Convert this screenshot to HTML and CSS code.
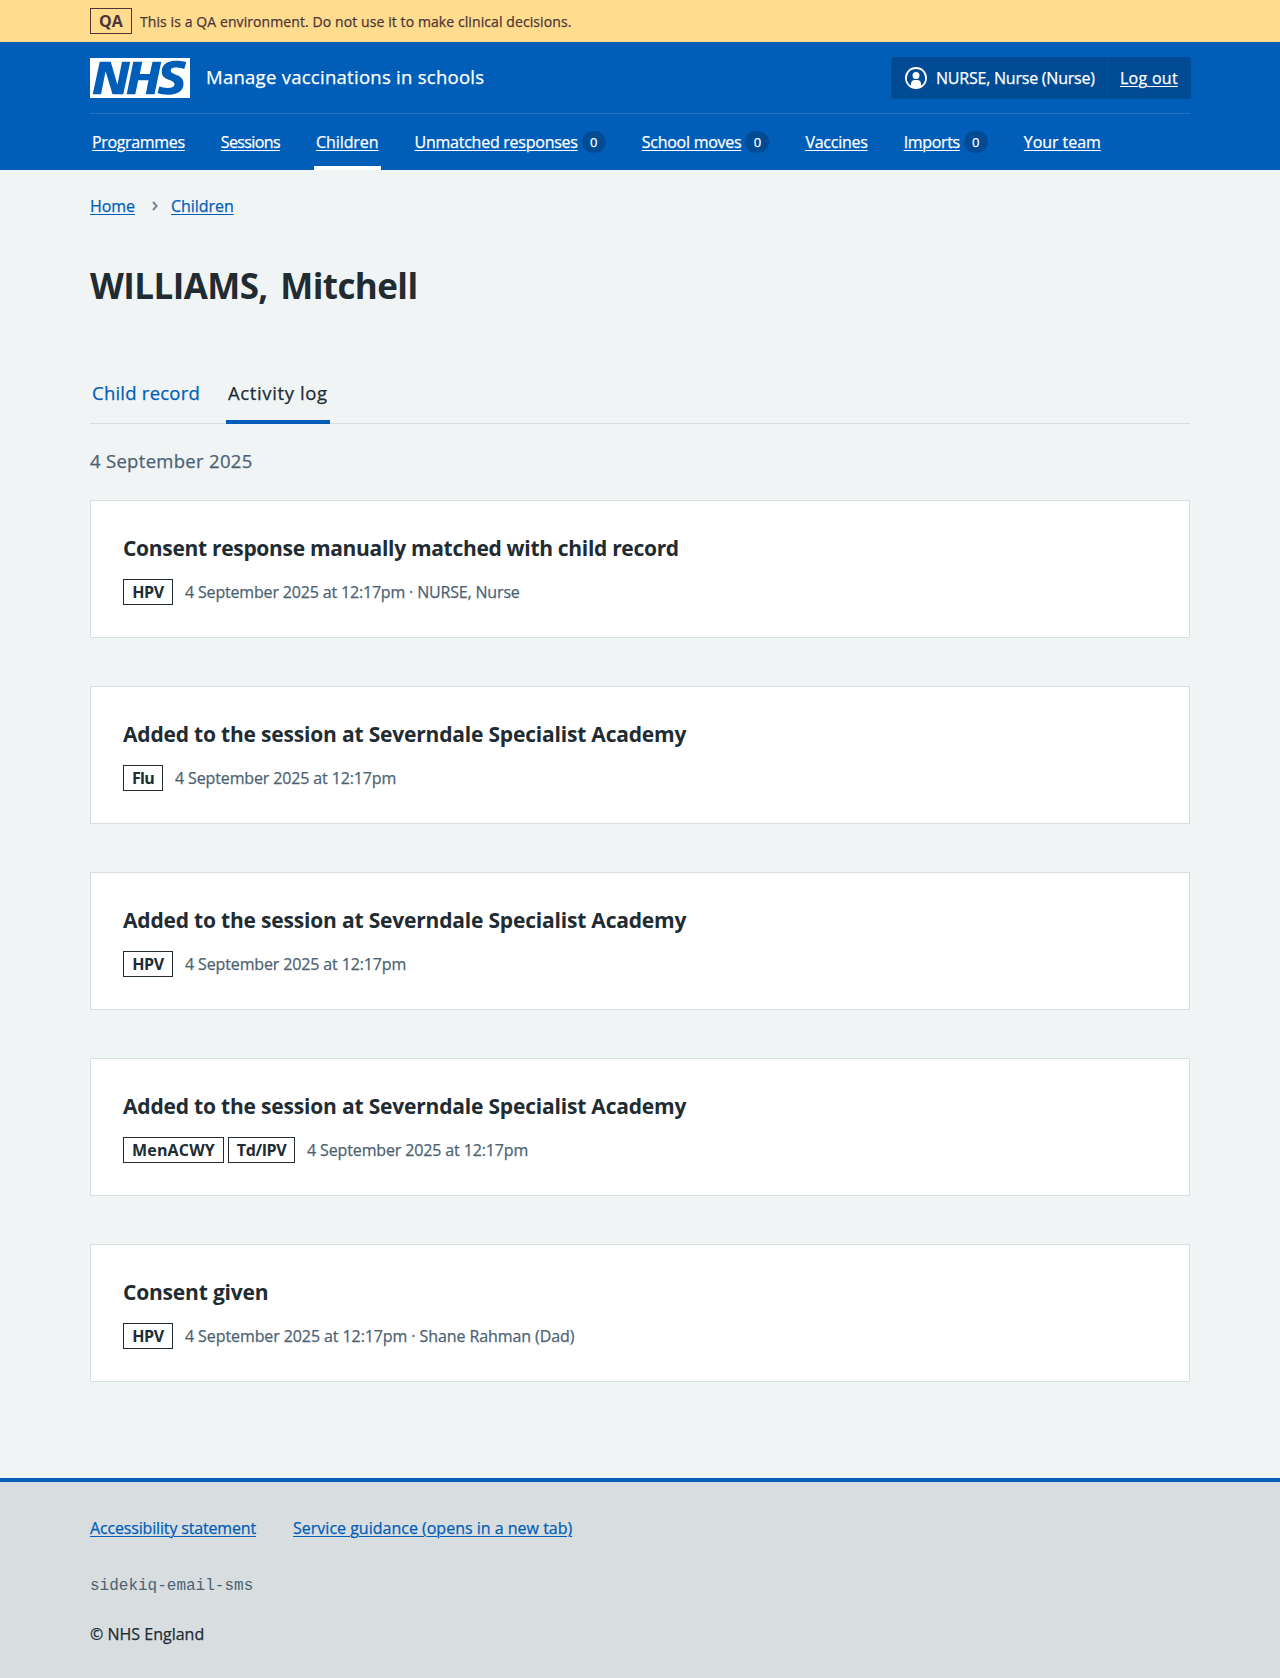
FILE: index.html
```html
<!DOCTYPE html>
<html lang="en">
<head>
<meta charset="utf-8">
<title>WILLIAMS, Mitchell – Manage vaccinations in schools</title>
<link rel="stylesheet" href="styles.css">
</head>
<body>
<div class="environment">
  <div class="container environment__inner">
    <strong class="environment__tag">QA</strong>
    <span class="environment__text">This is a QA environment. Do not use it to make clinical decisions.</span>
  </div>
</div>

<header class="header">
  <div class="container">
    <div class="header__top">
      <a class="header__service" href="#">
        <svg class="header__logo" viewBox="0 0 200 80" width="100" height="40" role="img" aria-label="NHS">
          <path fill="#fff" d="M200 0v80H0V0h200Zm-27.5 5.5c-14.5 0-29 5-29 22 0 10.2 7.7 13.5 14.7 16.3l.7.3c5.4 2 10.1 3.9 10.1 8.4 0 6.5-8.5 7.5-14 7.5s-12.5-1.5-16-3.5L135 70c5.5 2 13.5 3.5 20 3.5 15.5 0 32-4.5 32-22.5 0-19.5-25.5-16.5-25.5-25.5 0-5.5 5.5-6.5 12.5-6.5a35 35 0 0 1 14.5 3l4-13.5c-4.5-2-12-3-20-3Zm-131 2h-22l-14 65H22l9-45h.5l13.5 45h21.5l14-65H64l-9 45h-.5l-13-45Zm63 0h-18l-13 65h17l6-28H117l-5.5 28H129l13.5-65H125L119.5 32h-20l5-24.5Z"/>
        </svg>
        <span class="header__name">Manage vaccinations in schools</span>
      </a>
      <div class="account">
        <div class="account__user">
          <svg class="account__icon" viewBox="0 0 24 24" width="24" height="24" aria-hidden="true">
            <path fill="#fff" d="M12 1a11 11 0 1 1 0 22 11 11 0 0 1 0-22Zm0 2a9 9 0 0 0-5 16.5V18a4 4 0 0 1 4-4h2a4 4 0 0 1 4 4v1.500A9 9 0 0 0 12 3Zm0 3a3.500 3.500 0 1 1-3.500 3.500A3.500 3.500 0 0 1 12 6Z"/>
          </svg>
          <span class="account__name">NURSE, Nurse (Nurse)</span>
        </div>
        <a class="account__logout" href="#">Log out</a>
      </div>
    </div>
    <nav class="nav">
      <a class="nav__item" href="#"><span class="nav__text nav__text--programmes">Programmes</span></a>
      <a class="nav__item" href="#"><span class="nav__text nav__text--sessions">Sessions</span></a>
      <a class="nav__item nav__item--current" href="#"><span class="nav__text nav__text--wide">Children</span></a>
      <a class="nav__item" href="#"><span class="nav__text">Unmatched responses</span><span class="nav__count">0</span></a>
      <a class="nav__item" href="#"><span class="nav__text">School moves</span><span class="nav__count">0</span></a>
      <a class="nav__item" href="#"><span class="nav__text">Vaccines</span></a>
      <a class="nav__item" href="#"><span class="nav__text nav__text--imports">Imports</span><span class="nav__count">0</span></a>
      <a class="nav__item" href="#"><span class="nav__text nav__text--wide">Your team</span></a>
    </nav>
  </div>
</header>

<main class="container main">
  <nav class="breadcrumb">
    <a href="#">Home</a>
    <svg class="breadcrumb__chevron" viewBox="0 0 6 10" width="6" height="10" aria-hidden="true"><path d="M1 1l3.700 4L1 9" fill="none" stroke="#768692" stroke-width="2"/></svg>
    <a href="#">Children</a>
  </nav>
  <h1 class="title">WILLIAMS, Mitchell</h1>
  <nav class="tabs">
    <a class="tabs__item" href="#">Child record</a>
    <a class="tabs__item tabs__item--current" href="#">Activity log</a>
  </nav>
  <h2 class="date">4 September 2025</h2>
  <div class="log">
    <section class="card">
      <h3 class="card__title card__title--matched">Consent response manually matched with child record</h3>
      <p class="card__meta"><strong class="tag">HPV</strong><span class="card__text card__text--tight">4 September 2025 at 12:17pm · NURSE, Nurse</span></p>
    </section>
    <section class="card">
      <h3 class="card__title">Added to the session at Severndale Specialist Academy</h3>
      <p class="card__meta"><strong class="tag tag--flu">Flu</strong><span class="card__text">4 September 2025 at 12:17pm</span></p>
    </section>
    <section class="card">
      <h3 class="card__title">Added to the session at Severndale Specialist Academy</h3>
      <p class="card__meta"><strong class="tag">HPV</strong><span class="card__text">4 September 2025 at 12:17pm</span></p>
    </section>
    <section class="card">
      <h3 class="card__title">Added to the session at Severndale Specialist Academy</h3>
      <p class="card__meta"><strong class="tag tag--menacwy">MenACWY</strong><strong class="tag tag--tdipv">Td/IPV</strong><span class="card__text">4 September 2025 at 12:17pm</span></p>
    </section>
    <section class="card">
      <h3 class="card__title">Consent given</h3>
      <p class="card__meta"><strong class="tag">HPV</strong><span class="card__text card__text--wide">4 September 2025 at 12:17pm · Shane Rahman (Dad)</span></p>
    </section>
  </div>
</main>

<footer class="footer">
  <div class="container">
    <div class="footer__links">
      <a class="footer__link--tight" href="#">Accessibility statement</a>
      <a href="#">Service guidance (opens in a new tab)</a>
    </div>
    <p class="footer__build">sidekiq-email-sms</p>
    <p class="footer__copyright">© NHS England</p>
  </div>
</footer>
</body>
</html>
```
FILE: styles.css
```css
* {
  box-sizing: border-box;
}

body {
  margin: 0;
  background: #f0f4f5;
  color: #212b32;
  font: 16px/24px "Open Sans", "Noto Sans", sans-serif;
  -webkit-text-stroke: 0.25px;
}

h1, h2, h3, p {
  margin: 0;
}

strong, h1, h3 {
  -webkit-text-stroke: 0;
}

a {
  color: #005eb8;
  text-underline-offset: 2px;
  text-decoration-thickness: 1px;
  text-decoration-skip-ink: auto;
}

.container {
  width: 1100px;
  margin: 0 auto;
}

/* Environment banner */
.environment {
  background: #ffdc8e;
  color: #4d3638;
}

.environment__inner {
  display: flex;
  align-items: center;
  gap: 8px;
  height: 42px;
}

.environment__tag {
  width: 42px;
  height: 26px;
  border: 1px solid;
  line-height: 24px;
  text-align: center;
}

.environment__text {
  font-size: 14px;
  letter-spacing: 0.09px;
  padding-top: 1px;
}

/* Header */
.header {
  background: #005eb8;
  color: #fff;
}

.header a {
  color: #fff;
}

.header__top {
  display: flex;
  justify-content: space-between;
  height: 72px;
  padding: 16px 0 15px;
  border-bottom: 1px solid #266fc0;
}

.header__service {
  display: flex;
  gap: 16px;
  text-decoration: none;
}

.header__logo {
  display: block;
}

.header__name {
  font-size: 18.5px;
  line-height: 38px;
  letter-spacing: 0.27px;
}

.account {
  display: flex;
  width: 298px;
  height: 40px;
  border-radius: 3px;
  background: #004b93;
  box-shadow: 0 0 0 1px #004b93;
  line-height: 40px;
}

.account__user {
  display: flex;
  align-items: center;
  gap: 8px;
  width: 216px;
  padding-left: 12px;
  border-right: 1px solid #0057aa;
}

.account__name {
  letter-spacing: -0.22px;
  white-space: nowrap;
}

.account__logout {
  padding-left: 12px;
  letter-spacing: 0.27px;
}

.nav {
  display: flex;
  gap: 32px;
  height: 56px;
}

.nav__item {
  display: flex;
  align-items: center;
  padding: 4px 2px 0;
  border-bottom: 4px solid transparent;
  text-decoration: none;
}

.nav__item--current {
  border-color: #fff;
}

.nav__text {
  letter-spacing: -0.25px;
  text-decoration: underline;
  text-decoration-thickness: 1px;
}

.nav__text--programmes,
.nav__text--imports {
  letter-spacing: -0.34px;
}

.nav__text--sessions {
  letter-spacing: -0.62px;
}

.nav__text--wide {
  letter-spacing: -0.06px;
}

.nav__count {
  width: 24px;
  height: 22px;
  margin-left: 4px;
  border-radius: 11px;
  background: #004b93;
  font-size: 13px;
  line-height: 23px;
  text-align: center;
}

/* Page content */
.main {
  padding-top: 24px;
}

.breadcrumb {
  display: flex;
  align-items: center;
  letter-spacing: -0.05px;
}

.breadcrumb__chevron {
  margin: 0 13px 0 17px;
}

.title {
  margin-top: 43px;
  font-size: 35px;
  line-height: 50px;
  letter-spacing: -0.58px;
  word-spacing: 4px;
}

.tabs {
  display: flex;
  gap: 24px;
  height: 56px;
  margin-top: 57px;
  margin-bottom: 22px;
  box-shadow: inset 0 -1px #d8dde0;
}

.tabs__item {
  height: 56px;
  padding: 13px 2px 0;
  font-size: 18.5px;
  letter-spacing: 0.23px;
  text-decoration: none;
}

.tabs__item--current {
  border-bottom: 4px solid #005eb8;
  color: #212b32;
  letter-spacing: 0.61px;
}

.date {
  color: #4c6272;
  font-size: 18.5px;
  font-weight: 400;
  line-height: 30px;
  letter-spacing: 0.3px;
}

.log {
  display: grid;
  gap: 48px;
  margin-top: 24px;
}

.card {
  height: 138px;
  padding: 32px;
  border: 1px solid #d8dde0;
  background: #fff;
}

.card__title {
  font-size: 21px;
  line-height: 30px;
  letter-spacing: -0.19px;
}

.card__title--matched {
  letter-spacing: -0.31px;
}

.card__meta {
  display: flex;
  align-items: center;
  gap: 4px;
  margin-top: 16px;
}

.tag {
  height: 26px;
  width: 50px;
  border: 1px solid #212b32;
  line-height: 25px;
  letter-spacing: -0.4px;
  text-align: center;
}

.tag--flu {
  width: 40px;
  letter-spacing: -0.7px;
}

.tag--menacwy {
  width: 101px;
  letter-spacing: 0.15px;
}

.tag--tdipv {
  width: 67px;
}

.card__text {
  margin-left: 8px;
  color: #4c6272;
  letter-spacing: -0.13px;
}

.card__text--tight {
  letter-spacing: -0.17px;
}

.card__text--wide {
  letter-spacing: -0.09px;
}

/* Footer */
.footer {
  height: 200px;
  margin-top: 96px;
  padding-top: 34px;
  border-top: 4px solid #005eb8;
  background: #d8dde0;
}

.footer__links {
  display: flex;
  gap: 37px;
}

.footer__link--tight {
  letter-spacing: -0.16px;
}

.footer__build {
  margin-top: 34px;
  color: #4c6272;
  font-family: "Liberation Mono", monospace;
  -webkit-text-stroke: 0;
}

.footer__copyright {
  margin-top: 24px;
}
```
